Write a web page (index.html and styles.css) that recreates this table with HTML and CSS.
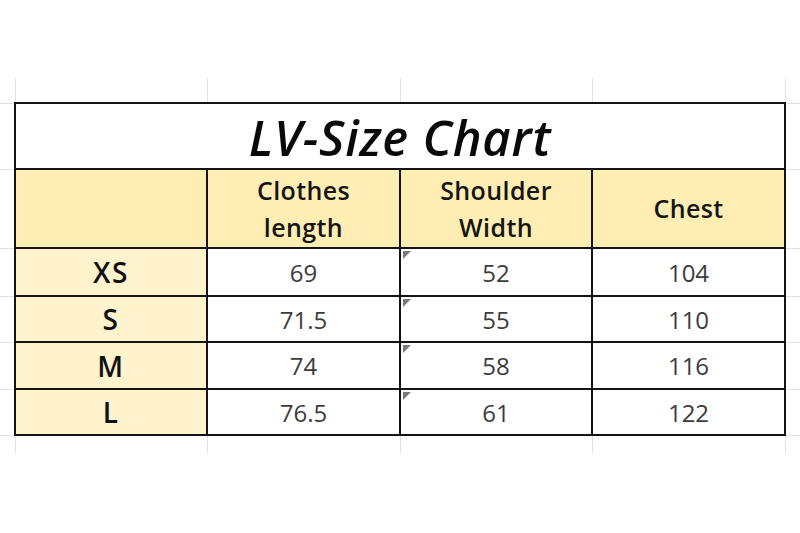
FILE: index.html
```html
<!DOCTYPE html>
<html>
<head>
<meta charset="utf-8">
<link rel="stylesheet" href="styles.css">
</head>
<body>
<div class="page">
<table class="sheet">
  <colgroup>
    <col class="c-edge"><col class="c-a"><col class="c-b"><col class="c-a"><col class="c-b"><col class="c-edge">
  </colgroup>
  <tr class="r-top">
    <td class="corner"></td><td class="mv"></td><td class="mv"></td><td class="mv"></td><td class="mv"></td><td class="corner"></td>
  </tr>
  <tr class="r-title">
    <td class="mh"></td>
    <td class="cell title" colspan="4">LV-Size Chart</td>
    <td class="mh"></td>
  </tr>
  <tr class="r-head">
    <td class="mh"></td>
    <td class="cell head"></td>
    <td class="cell head">Clothes<br>length</td>
    <td class="cell head">Shoulder<br>Width</td>
    <td class="cell head">Chest</td>
    <td class="mh"></td>
  </tr>
  <tr class="r-data r1">
    <td class="mh"></td>
    <td class="cell label">XS</td>
    <td class="cell num">69</td>
    <td class="cell num flag">52</td>
    <td class="cell num">104</td>
    <td class="mh"></td>
  </tr>
  <tr class="r-data r2">
    <td class="mh"></td>
    <td class="cell label">S</td>
    <td class="cell num">71.5</td>
    <td class="cell num flag">55</td>
    <td class="cell num">110</td>
    <td class="mh"></td>
  </tr>
  <tr class="r-data r3">
    <td class="mh"></td>
    <td class="cell label">M</td>
    <td class="cell num">74</td>
    <td class="cell num flag">58</td>
    <td class="cell num">116</td>
    <td class="mh"></td>
  </tr>
  <tr class="r-data r4">
    <td class="mh"></td>
    <td class="cell label">L</td>
    <td class="cell num">76.5</td>
    <td class="cell num flag">61</td>
    <td class="cell num">122</td>
    <td class="mh"></td>
  </tr>
  <tr class="r-bottom">
    <td class="corner"></td><td class="mv"></td><td class="mv"></td><td class="mv"></td><td class="mv"></td><td class="corner"></td>
  </tr>
</table>
</div>
</body>
</html>
```

FILE: styles.css
```css
html, body {
  margin: 0;
  padding: 0;
  background: #ffffff;
}
.page {
  width: 800px;
  height: 533px;
  padding-top: 78px;
  box-sizing: border-box;
  font-family: "Open Sans", "Noto Sans", sans-serif;
}
.sheet {
  border-collapse: collapse;
  table-layout: fixed;
  width: 800px;
}
.c-edge { width: 15px; }
.c-a { width: 192px; }
.c-b { width: 193px; }
td {
  padding: 0;
  text-align: center;
  vertical-align: middle;
}
.corner { border: none; }
.mv {
  border-left: 1px solid #e2e2e2;
  border-right: 1px solid #e2e2e2;
}
.mh {
  border-top: 1px solid #e2e2e2;
  border-bottom: 1px solid #e2e2e2;
}
.r-top td { height: 24px; }
.r-bottom td { height: 17px; }
.r-title td { height: 62px; }
.r-head td { height: 77px; }
.r1 td { height: 46px; }
.r2 td { height: 44px; }
.r3 td { height: 45px; }
.r4 td { height: 44px; }
.cell {
  border: 2px solid #141414;
}
.title {
  background: #ffffff;
  font-size: 49px;
  font-weight: 650;
  font-style: italic;
  color: #0a0a0a;
  line-height: 1;
  padding-top: 2px;
  letter-spacing: 0.8px;
}
.head {
  background: #ffeeb3;
  font-size: 25px;
  font-weight: 650;
  line-height: 37px;
  color: #151515;
  letter-spacing: 0.4px;
}
.label {
  background: #fff3cd;
  font-size: 28px;
  font-weight: 650;
  color: #111111;
  letter-spacing: 1.5px;
}
.num {
  background: #ffffff;
  font-size: 24px;
  font-weight: 400;
  color: #3c3c3c;
}
.flag {
  position: relative;
}
.flag::before {
  content: "";
  position: absolute;
  left: 2px;
  top: 2px;
  width: 0;
  height: 0;
  border-top: 8px solid #7a7a7a;
  border-right: 8px solid transparent;
}
```
